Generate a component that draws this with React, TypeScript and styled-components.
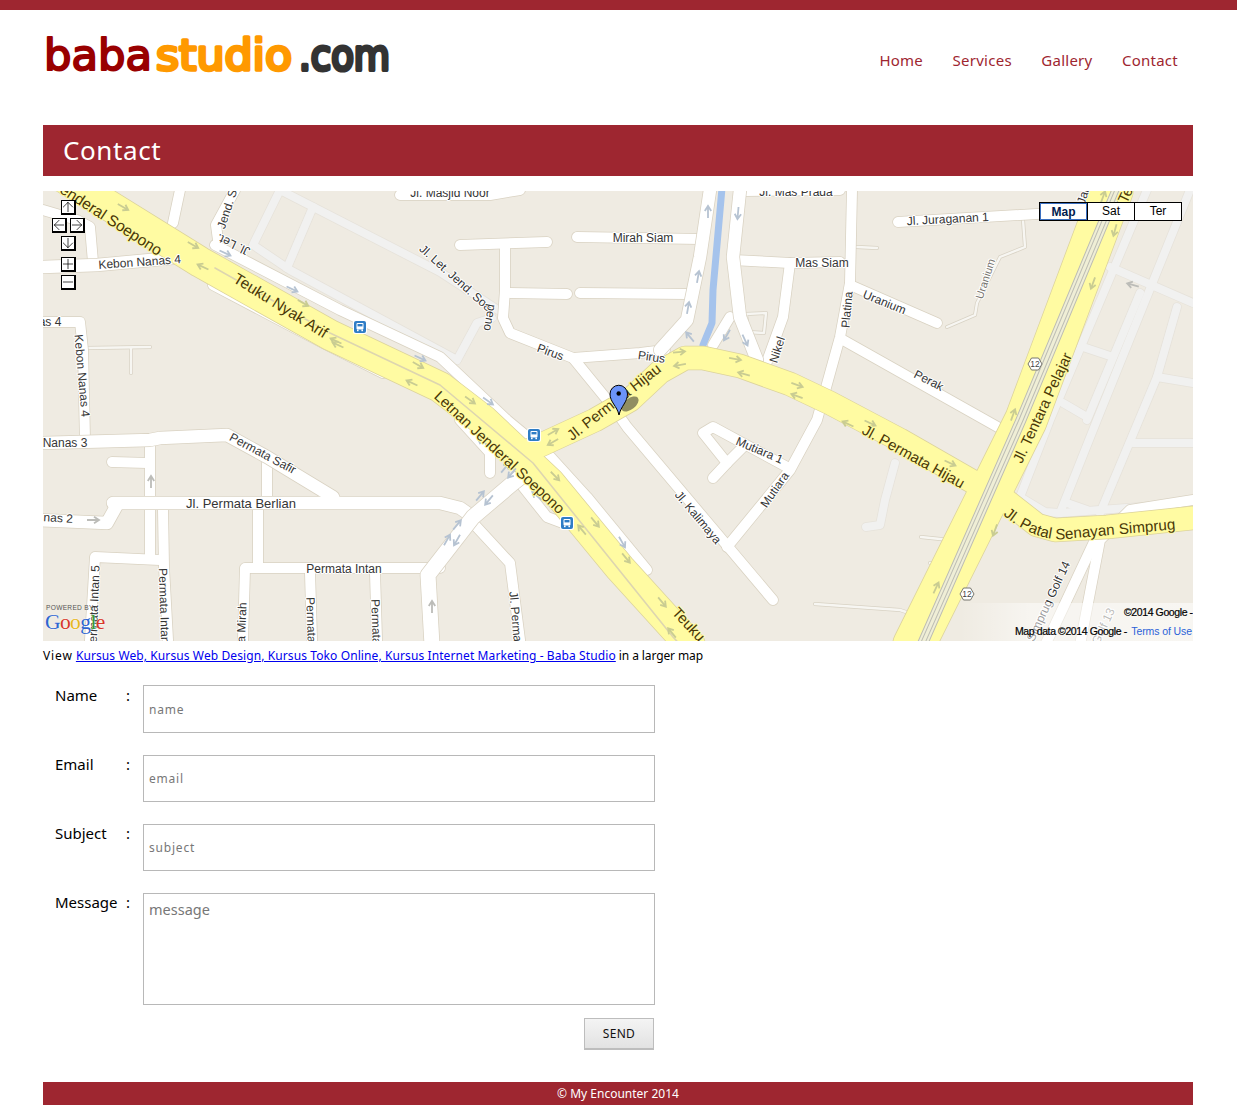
import styled, { createGlobalStyle } from "styled-components";
import { ArrowDown, ArrowLeft, ArrowRight, ArrowUp, Minus, Plus } from "lucide-react";

type Pt = [number, number];

const GlobalStyle = createGlobalStyle`
  html, body {
    margin: 0;
    padding: 0;
    background: #fff;
    font-family: "Noto Sans", "Liberation Sans", sans-serif;
  }
`;

// road centre lines in page pixels, the svg viewBox starts at the map's page offset
const grayRoads: Pt[][] = [
  [[280, 190], [253, 245], [290, 270], [457, 360]],
  [[313, 207], [287, 268]],
  [[280, 190], [440, 272], [498, 310]],
  [[457, 360], [477, 323], [492, 318]],
  [[1147, 190], [1050, 420], [1020, 497], [1045, 512], [1060, 513], [1193, 503]],
  [[1190, 190], [1097, 420], [1060, 513]],
  [[1140, 293], [1087, 420]],
  [[1177, 307], [1157, 377], [1100, 513]],
  [[1110, 267], [1193, 303]],
  [[1083, 347], [1113, 357]],
  [[1157, 377], [1193, 383]],
  [[1063, 403], [1087, 417]],
  [[1133, 443], [1193, 443]],
  [[1067, 503], [1087, 510]],
  [[895, 463], [885, 500], [880, 525], [866, 527]],
];

const whiteRoads: Pt[][] = [
  [[215, 245], [340, 310], [440, 357], [507, 420], [547, 453], [587, 497], [647, 570]],
  [[213, 285], [323, 343], [383, 373]],
  [[218, 240], [216, 225], [235, 190]],
  [[173, 223], [180, 190]],
  [[43, 210], [77, 220], [90, 227], [93, 262]],
  [[43, 322], [80, 322], [83, 350], [85, 440]],
  [[400, 195], [490, 195], [520, 190]],
  [[745, 191], [840, 190]],
  [[460, 245], [547, 242]],
  [[505, 245], [505, 290], [503, 318], [510, 333], [573, 358], [640, 353], [665, 350]],
  [[510, 293], [567, 294]],
  [[580, 293], [687, 294]],
  [[577, 237], [700, 239]],
  [[730, 317], [713, 345]],
  [[733, 260], [790, 263], [840, 262]],
  [[790, 263], [783, 317], [765, 367]],
  [[852, 190], [850, 283], [840, 337], [817, 420], [790, 470], [727, 547]],
  [[850, 285], [937, 323]],
  [[843, 340], [1003, 430]],
  [[898, 222], [1053, 213]],
  [[573, 358], [613, 407], [627, 427], [773, 600]],
  [[787, 467], [713, 427], [703, 433], [727, 463], [713, 478]],
  [[727, 463], [743, 447]],
  [[150, 443], [150, 558]],
  [[163, 510], [164, 567], [168, 640]],
  [[112, 462], [147, 463]],
  [[267, 463], [267, 497]],
  [[258, 510], [258, 563]],
  [[243, 640], [245, 568], [440, 568]],
  [[160, 560], [95, 557], [90, 640]],
  [[310, 573], [312, 640]],
  [[375, 573], [377, 640]],
  [[473, 523], [510, 563], [520, 640]],
  [[460, 420], [490, 453], [490, 473]],
  [[520, 483], [547, 517], [563, 523]],
  [[1095, 540], [1055, 625], [1045, 645]],
  [[1193, 500], [1130, 510], [1100, 540], [1080, 645]],
];

const mediumRoads: Pt[][] = [
  [[43, 267], [97, 265], [183, 257]],
  [[710, 190], [700, 257], [687, 320], [660, 350]],
  [[740, 190], [733, 257], [740, 317], [757, 360]],
  [[40, 443], [150, 440], [160, 438], [227, 435], [267, 457], [333, 497]],
  [[113, 503], [440, 503], [460, 508], [473, 517]],
  [[40, 520], [107, 523], [117, 505]],
];

const wideWhiteRoads: Pt[][] = [
  [[432, 645], [428, 575], [473, 517], [513, 483], [532, 468]],
];

const thinPaths: Pt[][] = [
  [[1023, 220], [1025, 247], [1000, 257], [977, 303], [975, 315], [947, 327]],
  [[87, 348], [150, 347]],
  [[131, 348], [131, 373]],
  [[857, 247], [877, 248]],
  [[815, 604], [900, 610], [915, 615]],
  [[921, 537], [950, 540]],
  [[930, 563], [942, 564]],
  [[746, 314], [766, 313], [764, 333], [748, 332], [746, 314]],
];

const yellowRoads: { points: Pt[]; width: number }[] = [
  { points: [[55, 172], [200, 262], [330, 335], [440, 387], [483, 420], [550, 483], [620, 568], [690, 645]], width: 30 },
  { points: [[530, 450], [595, 420], [630, 400], [660, 372], [685, 358], [703, 358], [740, 366], [790, 384], [830, 403], [900, 440], [975, 483], [1005, 500], [1037, 525], [1055, 530], [1107, 527], [1193, 518]], width: 23 },
  { points: [[1112, 190], [1026, 420], [914, 645]], width: 42 },
];

const arrows: { x: number; y: number; r: number; c: "y" | "b" | "g" }[] = [
  { x: 123, y: 207, r: 30, c: "y" }, { x: 193, y: 245, r: 30, c: "y" }, { x: 203, y: 267, r: 205, c: "y" },
  { x: 303, y: 303, r: 30, c: "y" }, { x: 336, y: 341, r: 205, c: "y" }, { x: 338, y: 345, r: 205, c: "y" },
  { x: 418, y: 365, r: 30, c: "y" }, { x: 412, y: 383, r: 205, c: "y" }, { x: 225, y: 253, r: 25, c: "b" },
  { x: 292, y: 289, r: 25, c: "b" }, { x: 420, y: 358, r: 25, c: "b" }, { x: 555, y: 476, r: 45, c: "y" },
  { x: 595, y: 522, r: 50, c: "y" }, { x: 626, y: 558, r: 50, c: "y" }, { x: 662, y: 602, r: 50, c: "y" },
  { x: 582, y: 530, r: 230, c: "y" }, { x: 672, y: 633, r: 230, c: "y" }, { x: 553, y: 432, r: -30, c: "y" },
  { x: 553, y: 442, r: 150, c: "y" }, { x: 483, y: 442, r: 215, c: "b" }, { x: 505, y: 468, r: -50, c: "b" },
  { x: 512, y: 473, r: 130, c: "b" }, { x: 480, y: 496, r: -50, c: "b" }, { x: 489, y: 500, r: 130, c: "b" },
  { x: 537, y: 496, r: 220, c: "b" }, { x: 457, y: 525, r: -50, c: "b" }, { x: 447, y: 540, r: -60, c: "b" },
  { x: 457, y: 540, r: 120, c: "b" }, { x: 622, y: 542, r: 60, c: "b" }, { x: 708, y: 212, r: -90, c: "b" },
  { x: 698, y: 277, r: -80, c: "b" }, { x: 688, y: 308, r: -80, c: "b" }, { x: 690, y: 337, r: 230, c: "b" },
  { x: 738, y: 213, r: 95, c: "b" }, { x: 727, y: 335, r: 120, c: "b" }, { x: 745, y: 340, r: 65, c: "b" },
  { x: 679, y: 352, r: -5, c: "y" }, { x: 680, y: 365, r: 170, c: "y" }, { x: 735, y: 359, r: 10, c: "y" },
  { x: 744, y: 374, r: 195, c: "y" }, { x: 797, y: 385, r: 20, c: "y" }, { x: 797, y: 396, r: 200, c: "y" },
  { x: 470, y: 400, r: 35, c: "y" }, { x: 488, y: 401, r: 35, c: "b" }, { x: 1133, y: 285, r: 195, c: "g" },
  { x: 1093, y: 283, r: 110, c: "y" }, { x: 1115, y: 230, r: 105, c: "y" }, { x: 1103, y: 197, r: -70, c: "y" },
  { x: 1013, y: 415, r: -70, c: "y" }, { x: 848, y: 424, r: 205, c: "y" }, { x: 870, y: 423, r: 25, c: "y" },
  { x: 950, y: 463, r: 25, c: "y" }, { x: 995, y: 530, r: 110, c: "y" }, { x: 936, y: 588, r: -65, c: "y" },
  { x: 151, y: 482, r: -90, c: "g" }, { x: 93, y: 520, r: 0, c: "g" }, { x: 432, y: 607, r: -90, c: "g" },
];

const labels: { t: string; x: number; y: number; r?: number; s?: number; k?: "road" | "major" | "faint" }[] = [
  { t: "Jenderal Soepono", x: 105, y: 222, r: 33, s: 15.5, k: "major" },
  { t: "Teuku Nyak Arif", x: 278, y: 310, r: 32, s: 15.5, k: "major" },
  { t: "Letnan Jenderal Soepono", x: 496, y: 456, r: 43, s: 15, k: "major" },
  { t: "Teuku", x: 685, y: 628, r: 47, s: 15, k: "major" },
  { t: "Jl. Permata Hijau", x: 617, y: 406, r: -38, s: 15, k: "major" },
  { t: "Jl. Permata Hijau", x: 911, y: 461, r: 29, s: 15, k: "major" },
  { t: "Jl. Tentara Pelajar", x: 1047, y: 410, r: -65, s: 15, k: "major" },
  { t: "Te", x: 1130, y: 197, r: -65, s: 15, k: "major" },
  { t: "Jar", x: 1087, y: 197, r: -72 },
  { t: "Jl. Masjid Noor", x: 450, y: 197 },
  { t: "Jl. Mas Prada", x: 796, y: 196 },
  { t: "Mirah Siam", x: 643, y: 242 },
  { t: "Mas Siam", x: 822, y: 267 },
  { t: "Jl. Juraganan 1", x: 948, y: 223, r: -3 },
  { t: "Uranium", x: 883, y: 306, r: 22 },
  { t: "Uranium", x: 989, y: 280, r: -72, s: 11, k: "faint" },
  { t: "Platina", x: 851, y: 310, r: -85 },
  { t: "Perak", x: 927, y: 384, r: 27 },
  { t: "Nikel", x: 781, y: 351, r: -72 },
  { t: "Pirus", x: 549, y: 356, r: 20 },
  { t: "Pirus", x: 651, y: 361, r: 8 },
  { t: "Jl. Let. Jend. Soe", x: 453, y: 281, r: 42 },
  { t: "peno", x: 486, y: 317, r: 100 },
  { t: "Jl. Let.", x: 235, y: 241, r: 205 },
  { t: "Jend. So", x: 232, y: 207, r: -72 },
  { t: "Kebon Nanas 4", x: 140, y: 266, r: -4 },
  { t: "as 4", x: 50, y: 326 },
  { t: "Kebon Nanas 4", x: 78, y: 376, r: 85 },
  { t: "Nanas 3", x: 65, y: 447 },
  { t: "nas 2", x: 58, y: 522, r: 3 },
  { t: "Permata Safir", x: 261, y: 457, r: 28 },
  { t: "Jl. Permata Berlian", x: 241, y: 508, s: 13 },
  { t: "Permata Intan", x: 344, y: 573 },
  { t: "Permata Intan 5", x: 98, y: 608, r: -88 },
  { t: "Permata Intan", x: 160, y: 606, r: 88 },
  { t: "Permata Mirah", x: 245, y: 642, r: -88 },
  { t: "Permata", x: 307, y: 620, r: 88 },
  { t: "Permata", x: 372, y: 622, r: 88 },
  { t: "Jl. Permata", x: 512, y: 622, r: 85 },
  { t: "Jl. Kalimaya", x: 695, y: 520, r: 50 },
  { t: "Mutiara 1", x: 758, y: 454, r: 23 },
  { t: "Mutiara", x: 778, y: 492, r: -55 },
  { t: "Simprug Golf 14", x: 1052, y: 603, r: -65 },
  { t: "Golf 13", x: 1107, y: 628, r: -65, k: "faint" },
];

const toPoints = (pts: Pt[]) => pts.map((p) => p.join(",")).join(" ");

const Line = styled.polyline<{ $w: number; $c: string }>`
  fill: none;
  stroke: ${({ $c }) => $c};
  stroke-width: ${({ $w }) => $w}px;
  stroke-linecap: round;
  stroke-linejoin: round;
`;

const RoadLayer = ({ roads, width, color, edge }: { roads: Pt[][]; width: number; color: string; edge: string }) => (
  <g>
    {roads.map((r, i) => <Line key={i} points={toPoints(r)} $w={width + 1.5} $c={edge} />)}
    {roads.map((r, i) => <Line key={i} points={toPoints(r)} $w={width} $c={color} />)}
  </g>
);

const ArrowStroke = styled.path<{ $c: string }>`
  fill: none;
  stroke: ${({ $c }) => $c};
  stroke-width: 1.8;
`;

const arrowColors = { y: "#c9cc92", b: "#b6c3d2", g: "#bcbcb8" };

const RoadLabel = styled.text<{ $k?: string; $s: number }>`
  font-family: "Liberation Sans", Arial, sans-serif;
  font-size: ${({ $s }) => $s}px;
  text-anchor: middle;
  paint-order: stroke;
  stroke-width: 2px;
  stroke-linejoin: round;
  fill: ${({ $k }) => ($k === "major" ? "#4a3808" : $k === "faint" ? "#77756f" : "#353535")};
  stroke: ${({ $k }) => ($k === "major" ? "#fffba0" : "#ffffff")};
`;

const CurvedLabel = styled.text`
  font-family: "Liberation Sans", Arial, sans-serif;
  font-size: 15.2px;
  paint-order: stroke;
  stroke-width: 2px;
  stroke-linejoin: round;
  fill: #4a3808;
  stroke: #fffba0;
`;

const SmallPrint = styled.text`
  font-family: "Liberation Sans", Arial, sans-serif;
  font-size: 10.5px;
  letter-spacing: -0.4px;
  fill: #000;
  stroke: #000;
  stroke-width: 0.2px;
`;

const SmallLink = styled.tspan`
  fill: #2a62d8;
  stroke: none;
  letter-spacing: -0.1px;
`;

const PoweredBy = styled.text`
  font-family: "Liberation Sans", Arial, sans-serif;
  font-size: 6.6px;
  letter-spacing: 0.3px;
  fill: #555;
`;

const GoogleMark = styled.text`
  font-family: "Liberation Serif", serif;
  font-size: 21.5px;
  letter-spacing: -0.6px;
  stroke: #fff;
  stroke-width: 0.5px;
  paint-order: stroke;
`;

const ShieldText = styled.text`
  font-family: "Liberation Sans", Arial, sans-serif;
  font-size: 8.5px;
  text-anchor: middle;
  fill: #444;
`;

const BusStop = ({ x, y }: { x: number; y: number }) => (
  <g transform={`translate(${x - 7} ${y - 7})`}>
    <rect width="14" height="14" rx="2.5" fill="#fff" />
    <rect x="1" y="1" width="12" height="12" rx="2" fill="#2f7dc6" />
    <rect x="3.5" y="3" width="7" height="6.6" rx="1" fill="#fff" />
    <rect x="4.5" y="4" width="5" height="2.4" fill="#2f7dc6" />
    <rect x="4" y="9.6" width="1.6" height="1.6" fill="#fff" />
    <rect x="8.4" y="9.6" width="1.6" height="1.6" fill="#fff" />
  </g>
);

const Shield = ({ x, y }: { x: number; y: number }) => (
  <g>
    <polygon
      points={`${x - 7},${y} ${x - 3.5},${y - 6} ${x + 3.5},${y - 6} ${x + 7},${y} ${x + 3.5},${y + 6} ${x - 3.5},${y + 6}`}
      fill="#fff"
      stroke="#77766e"
    />
    <ShieldText x={x} y={y + 3}>12</ShieldText>
  </g>
);

const MapDrawing = () => (
  <MapSvg viewBox="43 191 1150 450" width="1150" height="450">
    <defs>
      <linearGradient id="attrFade" x1="0" x2="1" y1="0" y2="0">
        <stop offset="0" stopColor="#fff" stopOpacity="0" />
        <stop offset="0.3" stopColor="#fff" stopOpacity="0.5" />
        <stop offset="1" stopColor="#fff" stopOpacity="0.55" />
      </linearGradient>
      <path id="patal" d="M1003,515 Q1040,545 1075,538 L1180,529" />
    </defs>
    <rect x="43" y="191" width="1150" height="450" fill="#efebe2" />
    <RoadLayer roads={thinPaths} width={2.4} color="#f7f6f2" edge="#d8d2c4" />
    <RoadLayer roads={grayRoads} width={8} color="#f1f1f0" edge="#e6e2da" />
    <RoadLayer roads={whiteRoads} width={10} color="#ffffff" edge="#d9d2c2" />
    <RoadLayer roads={mediumRoads} width={12.5} color="#ffffff" edge="#d9d2c2" />
    <RoadLayer roads={wideWhiteRoads} width={15} color="#ffffff" edge="#d9d2c2" />
    <Line points="722,188 713,290 712,323 703,345" $w={7} $c="#a5c3ec" />
    {yellowRoads.map((r, i) => <Line key={i} points={toPoints(r.points)} $w={r.width + 1.5} $c="#dcd39c" />)}
    {yellowRoads.map((r, i) => <Line key={i} points={toPoints(r.points)} $w={r.width} $c="#fffba2" />)}
    <Line points="215,268 330,333 440,385 533,463 673,637 690,655" $w={1.6} $c="#ddd5b0" />
    <Line points="1117,190 1021,420 922,645" $w={11} $c="#bdbdb3" />
    <Line points="1117,190 1021,420 922,645" $w={9} $c="#efeed6" />
    <Line points="1117,190 1021,420 922,645" $w={5} $c="#bdbdb3" />
    <Line points="1117,190 1021,420 922,645" $w={3} $c="#efeed6" />
    {arrows.map((a, i) => (
      <g key={i} transform={`translate(${a.x} ${a.y}) rotate(${a.r})`}>
        <ArrowStroke d="M-6,0 H5 M1,-3.2 L6,0 L1,3.2" $c={arrowColors[a.c]} />
      </g>
    ))}
    {labels.map((l, i) => (
      <RoadLabel key={i} x={l.x} y={l.y} $s={l.s ?? 12} $k={l.k} transform={l.r ? `rotate(${l.r} ${l.x} ${l.y})` : undefined}>
        {l.t}
      </RoadLabel>
    ))}
    <CurvedLabel>
      <textPath href="#patal">Jl. Patal Senayan Simprug</textPath>
    </CurvedLabel>
    <BusStop x={360} y={327} />
    <BusStop x={534} y={435} />
    <BusStop x={567} y={523} />
    <Shield x={1035} y={364} />
    <Shield x={967} y={594} />
    <ellipse cx="630" cy="404" rx="10" ry="5.5" fill="#222" opacity="0.5" transform="rotate(-38 630 404)" />
    <path d="M619,415 C617,406 610,402 610,394 A8.7,8.7 0 1 1 627.5,394 C627.5,402 621,406 619,415 Z" fill="#6b93f8" stroke="#000" strokeWidth="1" />
    <circle cx="618.7" cy="393.5" r="2.2" fill="#000" />
    <rect x="960" y="603" width="233" height="38" fill="url(#attrFade)" />
    <SmallPrint x="1124" y="616">©2014 Google -</SmallPrint>
    <SmallPrint x="1015" y="635">
      Map data ©2014 Google - <SmallLink dx="2">Terms of Use</SmallLink>
    </SmallPrint>
    <PoweredBy x="46" y="610">POWERED BY</PoweredBy>
    <GoogleMark x="45" y="629">
      <tspan fill="#2f66d0">G</tspan>
      <tspan fill="#d8382a">o</tspan>
      <tspan fill="#e8b81e">o</tspan>
      <tspan fill="#2f66d0">g</tspan>
      <tspan fill="#3a9a3a">l</tspan>
      <tspan fill="#d8382a">e</tspan>
    </GoogleMark>
  </MapSvg>
);

const Logo = () => (
  <LogoSvg viewBox="43 30 352 50" width="352" height="50" role="img" aria-label="babastudio.com">
    <LogoText x="44" y="70" textLength="108" lengthAdjust="spacingAndGlyphs" $c="#990000" $w={2}>baba</LogoText>
    <LogoText x="156" y="70" textLength="136" lengthAdjust="spacingAndGlyphs" $c="#ff9900" $w={3.4}>studio</LogoText>
    <LogoText x="299" y="70" textLength="91" lengthAdjust="spacingAndGlyphs" $c="#333333" $w={4}>.com</LogoText>
  </LogoSvg>
);

const App = () => {
  return (
    <>
      <GlobalStyle />
      <TopStrip />
      <PageWrap>
        <HeaderRow>
          <Logo />
          <NavList>
            <NavLink href="#">Home</NavLink>
            <NavLink href="#">Services</NavLink>
            <NavLink href="#">Gallery</NavLink>
            <NavLink href="#">Contact</NavLink>
          </NavList>
        </HeaderRow>
        <TitleBar>Contact</TitleBar>
        <MapFrame>
          <MapDrawing />
          <PanZoom>
            <CtlRow><CtlButton><ArrowUp size={16} strokeWidth={1.1} /></CtlButton></CtlRow>
            <CtlRow>
              <CtlButton><ArrowLeft size={16} strokeWidth={1.1} /></CtlButton>
              <CtlButton><ArrowRight size={16} strokeWidth={1.1} /></CtlButton>
            </CtlRow>
            <CtlRow><CtlButton><ArrowDown size={16} strokeWidth={1.1} /></CtlButton></CtlRow>
            <ZoomGroup>
              <CtlButton><Plus size={16} strokeWidth={1.1} /></CtlButton>
              <CtlButton><Minus size={16} strokeWidth={1.1} /></CtlButton>
            </ZoomGroup>
          </PanZoom>
          <MapTypes>
            <MapTypeButton $active>Map</MapTypeButton>
            <MapTypeButton>Sat</MapTypeButton>
            <MapTypeButton>Ter</MapTypeButton>
          </MapTypes>
        </MapFrame>
        <ViewLine>
          <ViewWord>View</ViewWord> <a href="#">Kursus Web, Kursus Web Design, Kursus Toko Online, Kursus Internet Marketing - Baba Studio</a> in a larger map
        </ViewLine>
        <ContactForm onSubmit={(e) => e.preventDefault()}>
          <FormRow>
            <FieldLabel $nudge>Name</FieldLabel>
            <Colon $nudge>:</Colon>
            <TextInput $tall placeholder="name" />
          </FormRow>
          <FormRow>
            <FieldLabel>Email</FieldLabel>
            <Colon>:</Colon>
            <TextInput placeholder="email" />
          </FormRow>
          <FormRow>
            <FieldLabel>Subject</FieldLabel>
            <Colon>:</Colon>
            <TextInput placeholder="subject" />
          </FormRow>
          <FormRow>
            <FieldLabel>Message</FieldLabel>
            <Colon>:</Colon>
            <MessageArea placeholder="message" />
          </FormRow>
          <SendRow>
            <SendButton type="submit">SEND</SendButton>
          </SendRow>
        </ContactForm>
        <Footer>© My Encounter 2014</Footer>
      </PageWrap>
    </>
  );
};

export default App;

const TopStrip = styled.div`
  height: 10px;
  background: #9e2630;
`;

const PageWrap = styled.div`
  width: 1150px;
  margin-left: 43px;
`;

const HeaderRow = styled.header`
  height: 115px;
  display: flex;
  justify-content: space-between;
  align-items: flex-start;
`;

const LogoSvg = styled.svg`
  display: block;
  margin-top: 20px;
`;

const LogoText = styled.text<{ $c: string; $w: number }>`
  font-family: "DejaVu Sans", sans-serif;
  font-size: 42px;
  fill: ${({ $c }) => $c};
  stroke: ${({ $c }) => $c};
  stroke-width: ${({ $w }) => $w}px;
  stroke-linejoin: round;
  stroke-linecap: round;
`;

const NavList = styled.nav`
  display: flex;
  gap: 29.5px;
  margin: 40px 15px 0 0;
`;

const NavLink = styled.a`
  color: #9e2630;
  font-size: 15px;
  line-height: 20px;
  letter-spacing: 0.25px;
  text-decoration: none;
`;

const TitleBar = styled.h1`
  margin: 0 0 15px;
  height: 51px;
  padding-left: 20px;
  background: #9e2630;
  color: #fff;
  font-size: 26px;
  font-weight: 400;
  line-height: 51px;
  letter-spacing: 0.6px;
`;

const MapFrame = styled.div`
  position: relative;
  height: 450px;
  overflow: hidden;
`;

const MapSvg = styled.svg`
  display: block;
`;

const PanZoom = styled.div`
  position: absolute;
  left: 9px;
  top: 9px;
  width: 33px;
  display: flex;
  flex-direction: column;
  gap: 3px;
`;

const CtlRow = styled.div`
  display: flex;
  justify-content: center;
  gap: 3px;
`;

const ZoomGroup = styled.div`
  display: flex;
  flex-direction: column;
  align-items: center;
  gap: 3px;
  margin-top: 3px;
`;

const CtlButton = styled.div`
  width: 15px;
  height: 15px;
  box-sizing: border-box;
  display: flex;
  align-items: center;
  justify-content: center;
  background: #fff;
  border: 1px solid #000;
  border-right-width: 2px;
  border-bottom-width: 2px;
  color: #000;
  overflow: hidden;
  svg {
    flex-shrink: 0;
  }
`;

const MapTypes = styled.div`
  position: absolute;
  top: 11px;
  right: 11px;
  display: flex;
  border: 1px solid #000;
  background: #fff;
`;

const MapTypeButton = styled.div<{ $active?: boolean }>`
  width: 47px;
  height: 17px;
  box-sizing: border-box;
  text-align: center;
  font-family: "Liberation Sans", Arial, sans-serif;
  font-size: 12px;
  line-height: 16px;
  color: #000;
  font-weight: ${({ $active }) => ($active ? 700 : 400)};
  border-left: 1px solid #000;
  ${({ $active }) => $active && "border: 1px solid #3a6fc0; color: #001a4d;"}
`;

const ViewLine = styled.p`
  margin: 6px 0 0;
  height: 18px;
  font-size: 12px;
  line-height: 18px;
  letter-spacing: -0.1px;
  color: #000;
  a {
    color: #0000ee;
    letter-spacing: 0.1px;
  }
`;

const ViewWord = styled.span`
  letter-spacing: 0.9px;
`;

const ContactForm = styled.form`
  margin-top: 20px;
  display: flex;
  flex-direction: column;
  gap: 22px;
`;

const FormRow = styled.div`
  display: grid;
  grid-template-columns: 71px 17px 512px;
  padding-left: 12px;
  align-items: start;
`;

const FieldLabel = styled.label<{ $nudge?: boolean }>`
  font-size: 15px;
  line-height: 19px;
  color: #000;
  padding-top: ${({ $nudge }) => ($nudge ? 1 : 0)}px;
`;

const Colon = styled.span<{ $nudge?: boolean }>`
  font-size: 15px;
  line-height: 19px;
  color: #000;
  padding-top: ${({ $nudge }) => ($nudge ? 1 : 0)}px;
`;

const TextInput = styled.input<{ $tall?: boolean }>`
  box-sizing: border-box;
  width: 512px;
  height: ${({ $tall }) => ($tall ? 48 : 47)}px;
  padding: 0 5px;
  border: 1px solid #b8b8b8;
  border-radius: 0;
  outline: none;
  font-family: "Noto Sans", sans-serif;
  font-size: 12px;
  letter-spacing: 0.8px;
  &::placeholder {
    color: #777;
    opacity: 1;
  }
`;

const MessageArea = styled.textarea`
  display: block;
  box-sizing: border-box;
  width: 512px;
  height: 112px;
  padding: 5px;
  border: 1px solid #b8b8b8;
  border-radius: 0;
  outline: none;
  resize: none;
  font-family: "Noto Sans", sans-serif;
  font-size: 14.5px;
  &::placeholder {
    color: #777;
    opacity: 1;
  }
`;

const SendRow = styled.div`
  width: 611px;
  margin-top: -9px;
  display: flex;
  justify-content: flex-end;
`;

const SendButton = styled.button`
  width: 70px;
  height: 32px;
  padding: 0;
  border: 1px solid #bdbdbd;
  border-bottom-width: 2px;
  background: linear-gradient(#f4f4f4, #e2e2e2);
  font-family: "Noto Sans", sans-serif;
  font-size: 12px;
  color: #111;
  letter-spacing: 0.3px;
`;

const Footer = styled.footer`
  margin-top: 32px;
  height: 23px;
  background: #9e2630;
  color: #fff;
  text-align: center;
  font-size: 12px;
  line-height: 23px;
`;
